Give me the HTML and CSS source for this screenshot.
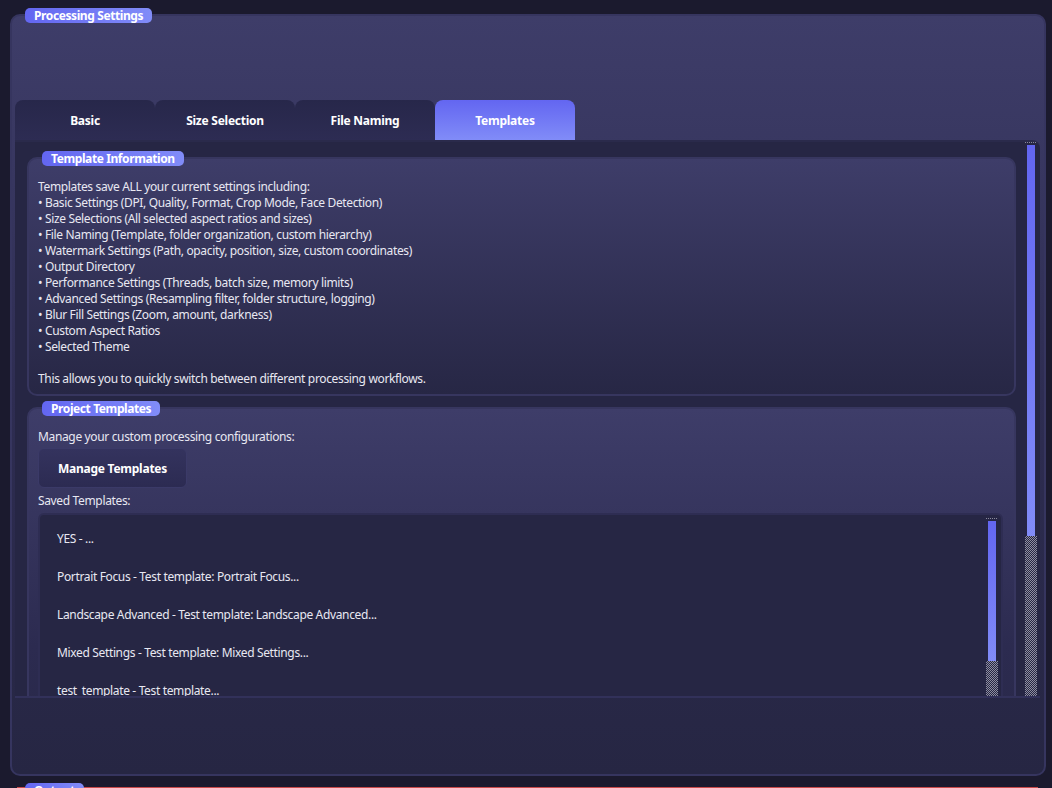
FILE: index.html
```html
<!DOCTYPE html>
<html>
<head>
<meta charset="utf-8">
<link rel="stylesheet" href="styles.css">
</head>
<body>
<div class="outer">
  <div class="legend">Processing Settings</div>
  <div class="tabbar">
    <div class="tab">Basic</div>
    <div class="tab">Size Selection</div>
    <div class="tab">File Naming</div>
    <div class="tab active">Templates</div>
  </div>
  <div class="pane">
    <div class="scrollarea">
      <div class="content">
        <div class="group g1">
          <div class="legend">Template Information</div>
          <div class="info">
            <div class="line">Templates save ALL your current settings including:</div>
            <div class="line">• Basic Settings (DPI, Quality, Format, Crop Mode, Face Detection)</div>
            <div class="line">• Size Selections (All selected aspect ratios and sizes)</div>
            <div class="line">• File Naming (Template, folder organization, custom hierarchy)</div>
            <div class="line">• Watermark Settings (Path, opacity, position, size, custom coordinates)</div>
            <div class="line">• Output Directory</div>
            <div class="line">• Performance Settings (Threads, batch size, memory limits)</div>
            <div class="line">• Advanced Settings (Resampling filter, folder structure, logging)</div>
            <div class="line">• Blur Fill Settings (Zoom, amount, darkness)</div>
            <div class="line">• Custom Aspect Ratios</div>
            <div class="line">• Selected Theme</div>
            <div class="line">&nbsp;</div>
            <div class="line">This allows you to quickly switch between different processing workflows.</div>
          </div>
        </div>
        <div class="group g2">
          <div class="legend">Project Templates</div>
          <div class="line">Manage your custom processing configurations:</div>
          <div class="button">Manage Templates</div>
          <div class="line saved">Saved Templates:</div>
          <div class="list">
            <div class="items">
              <div class="item">YES - ...</div>
              <div class="item">Portrait Focus - Test template: Portrait Focus...</div>
              <div class="item">Landscape Advanced - Test template: Landscape Advanced...</div>
              <div class="item">Mixed Settings - Test template: Mixed Settings...</div>
              <div class="item">test_template - Test template...</div>
              <div class="item">Default - Test template...</div>
            </div>
            <div class="vscroll small">
              <div class="sub"></div>
              <div class="handle"></div>
              <div class="add"></div>
            </div>
          </div>
        </div>
      </div>
      <div class="vscroll big">
        <div class="sub"></div>
        <div class="handle"></div>
        <div class="add"></div>
      </div>
    </div>
  </div>
</div>
<div class="output">
  <div class="legend">Output</div>
</div>
</body>
</html>
```

FILE: styles.css
```css
html, body {
  margin: 0;
  padding: 0;
  height: 788px;
  overflow: hidden;
}
body {
  background: #1b1a2e;
  font-family: "Noto Sans", "Open Sans", sans-serif;
  font-size: 12px;
  letter-spacing: -0.35px;
  color: #e8e8f2;
}
.outer {
  position: relative;
  margin: 14px 6px 0 10px;
  box-sizing: border-box;
  height: 762px;
  border: 2px solid #36355f;
  border-radius: 10px;
  background: linear-gradient(to bottom, #3e3d69 0%, #2e2d52 50%, #262643 100%);
  padding: 84px 4px 0 3px;
}
.legend {
  position: absolute;
  left: 13px;
  top: -8px;
  height: 15px;
  line-height: 15px;
  padding: 0 9px;
  border-radius: 5px;
  background: linear-gradient(to right, #6366f1, #818cf8);
  color: #ffffff;
  font-weight: 700;
  font-size: 12px;
  letter-spacing: -0.4px;
  white-space: nowrap;
}
.tabbar {
  display: flex;
  height: 40px;
}
.tab {
  width: 140px;
  height: 40px;
  display: flex;
  align-items: center;
  justify-content: center;
  border-radius: 8px 8px 0 0;
  background: linear-gradient(to bottom, #27274a, #2d2c53);
  font-weight: 700;
  letter-spacing: -0.25px;
  color: #ffffff;
}
.tab.active {
  background: linear-gradient(to bottom, #6366f1, #818cf8);
}
.pane {
  background: #262644;
  border-top: 2px solid #2a2a4b;
  border-bottom: 2px solid #32315a;
  border-radius: 0 8px 0 0;
  box-sizing: content-box;
  height: 554px;
}
.scrollarea {
  display: flex;
  height: 554px;
  overflow: hidden;
}
.content {
  flex: 1;
  padding: 15px 9px 0 12px;
  overflow: hidden;
}
.group {
  position: relative;
  border: 2px solid #37365f;
  border-radius: 10px;
  background: linear-gradient(to bottom, #3e3d69, #272745);
  box-sizing: border-box;
}
.g1 {
  height: 239px;
  padding: 20px 9px 0 9px;
}
.g2 {
  margin-top: 11px;
  height: 400px;
  padding: 20px 11px 0 9px;
  background: linear-gradient(to bottom, #3e3d69 0%, #2c2b50 60%, #272745 100%);
}
.line {
  height: 16px;
  line-height: 16px;
  white-space: nowrap;
}
.button {
  margin-top: 3px;
  width: 149px;
  height: 40px;
  box-sizing: border-box;
  border: 1px solid #3b3a68;
  border-radius: 6px;
  background: linear-gradient(to bottom, #34335e, #2c2b52);
  display: flex;
  align-items: center;
  justify-content: center;
  font-weight: 700;
  letter-spacing: -0.25px;
  color: #ffffff;
}
.saved {
  margin-top: 5px;
}
.list {
  margin-top: 4px;
  height: 260px;
  box-sizing: border-box;
  border: 2px solid #2e2d53;
  border-radius: 6px;
  background: #262644;
  display: flex;
}
.items {
  flex: 1;
  padding: 14px 0 0 17px;
}
.item {
  height: 38px;
  line-height: 20px;
  white-space: nowrap;
}
.vscroll {
  display: flex;
  flex-direction: column;
  width: 12px;
}
.vscroll .sub {
  height: 3px;
  background: linear-gradient(to bottom, transparent 1px, #262644 1px), repeating-linear-gradient(to right, #8a8a9c 0 1px, #262644 1px 2px);
}
.vscroll .handle {
  margin: 0 2px;
  background: linear-gradient(to bottom, #6366f1, #818cf8);
}
.vscroll .add {
  flex: 1;
  background: repeating-conic-gradient(#8e8ea0 0 25%, #262644 0 50%) 0 0 / 2px 2px;
}
.vscroll.big {
  margin-right: 3px;
}
.vscroll.big .handle {
  height: 391px;
}
.vscroll.small {
  margin: 3px 3px 0 0;
}
.vscroll.small .handle {
  height: 140px;
}
.output {
  position: relative;
  margin: 11px 14px 0 17px;
  height: 40px;
  border-top: 2px solid #c94a4a;
}
.output .legend {
  left: 8px;
  top: -6px;
}
```
